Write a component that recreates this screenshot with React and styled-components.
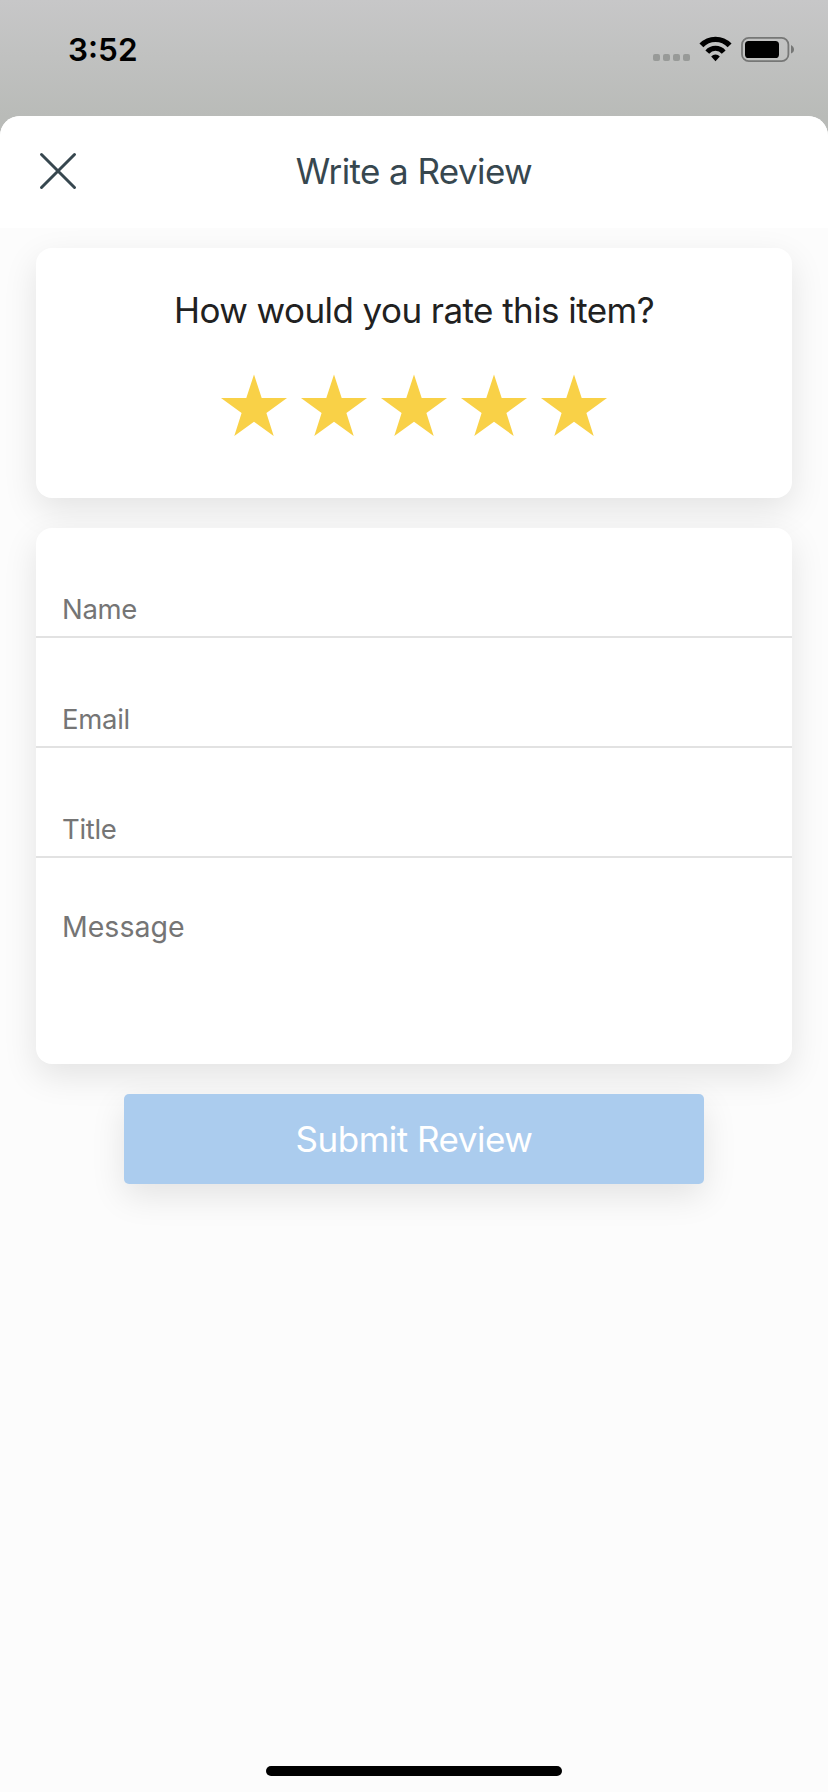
import React, { useState } from 'react';
import styled, { createGlobalStyle, css } from 'styled-components';

const GlobalStyle = createGlobalStyle`
    * {
        box-sizing: border-box;
    }
    body {
        margin: 0;
        font-family: Inter, "Liberation Sans", sans-serif;
        -webkit-font-smoothing: antialiased;
    }
`;

const Screen = styled.div`
    width: 828px;
    height: 1792px;
    display: flex;
    flex-direction: column;
    overflow: hidden;
    background: linear-gradient(#c7c7c8 0, #b9bbb8 116px, #b9bbb8 100%);
`;

const StatusBar = styled.div`
    height: 116px;
    flex: none;
    display: flex;
    justify-content: space-between;
    padding: 30px 34px 0 68px;
`;

const Clock = styled.div`
    font-size: 31.5px;
    line-height: 40px;
    font-weight: 600;
    letter-spacing: 0;
    color: #000;
`;

const StatusIcons = styled.svg`
    width: 144px;
    height: 30px;
    margin-top: 5px;
`;

const Sheet = styled.div`
    flex: 1;
    display: flex;
    flex-direction: column;
    background: #fcfcfc;
    border-radius: 20px 20px 0 0;
    overflow: hidden;
`;

const Header = styled.div`
    height: 112px;
    flex: none;
    display: grid;
    grid-template-columns: 116px 1fr 116px;
    align-items: center;
    padding-bottom: 2px;
    background: #fff;
`;

const CloseButton = styled.button`
    width: 40px;
    height: 40px;
    margin-left: 38px;
    padding: 0;
    border: 0;
    background: none;
    svg {
        display: block;
    }
`;

const HeaderTitle = styled.div`
    text-align: center;
    font-size: 35px;
    line-height: 44px;
    letter-spacing: -0.6px;
    color: #37474f;
`;

const Content = styled.div`
    flex: 1;
    display: flex;
    flex-direction: column;
    gap: 30px;
    padding: 20px 36px 0;
`;

const Card = styled.div`
    height: ${props => props.$height}px;
    background: #fff;
    border-radius: 16px;
    box-shadow: 0 12px 34px rgba(0, 0, 0, 0.1);
`;

const Question = styled.div`
    padding-top: 40px;
    text-align: center;
    font-size: 35px;
    line-height: 44px;
    letter-spacing: -0.57px;
    color: #212121;
`;

const Stars = styled.div`
    display: flex;
    justify-content: center;
    margin-top: 35px;
`;

const StarButton = styled.button`
    width: 80px;
    height: 80px;
    padding: 0;
    border: 0;
    background: none;
    svg {
        display: block;
        fill: ${props => (props.$active ? '#f9d147' : '#e0e0e0')};
    }
`;

const field = css`
    display: block;
    width: 100%;
    border: 0;
    outline: 0;
    background: transparent;
    font-family: inherit;
    color: #212121;
    &::placeholder {
        color: #757575;
        opacity: 1;
    }
`;

const Input = styled.input`
    ${field}
    height: 110px;
    padding: 54px 26px 0;
    border-bottom: 2px solid #e2e2e2;
    font-size: 27.5px;
    letter-spacing: -0.3px;
`;

const TextArea = styled.textarea`
    ${field}
    height: 200px;
    padding: 50px 26px 0;
    resize: none;
    font-size: 28.5px;
    line-height: 38px;
    letter-spacing: 0;
`;

const SubmitButton = styled.button`
    align-self: center;
    width: 580px;
    height: 90px;
    padding: 0;
    border: 0;
    border-radius: 5px;
    background: #abccee;
    box-shadow: 0 12px 34px rgba(0, 0, 0, 0.1);
    font-family: inherit;
    font-size: 35px;
    letter-spacing: -0.5px;
    color: #fff;
`;

const HomeIndicator = styled.div`
    flex: none;
    align-self: center;
    width: 296px;
    height: 10px;
    margin-bottom: 16px;
    border-radius: 5px;
    background: #000;
`;

const fields = ['Name', 'Email', 'Title'];

function Star({ active, onClick }) {
    return (
        <StarButton $active={active} onClick={onClick}>
            <svg width="80" height="80" viewBox="0 0 80 80">
                <path d="M40 7.5 L47.7 31 H73 L52.4 46 L59.7 69 L40 54.8 L20.3 69 L27.6 46 L7 31 H32.3 Z" />
            </svg>
        </StarButton>
    )
}

function App() {
    const [rating, setRating] = useState(5)

    return (
        <Screen>
            <GlobalStyle />
            <StatusBar>
                <Clock>3:52</Clock>
                <StatusIcons viewBox="650 35 144 30">
                    <g fill="#989a98">
                        <rect x="653" y="54" width="7" height="7" rx="2" />
                        <rect x="663" y="54" width="7" height="7" rx="2" />
                        <rect x="673" y="54" width="7" height="7" rx="2" />
                        <rect x="683" y="54" width="7" height="7" rx="2" />
                    </g>
                    <g fill="none" stroke="#000">
                        <path d="M701.4 45.4 A19.5 19.5 0 0 1 729.6 45.4" strokeWidth="5.4" />
                        <path d="M707.3 52.1 A10.8 10.8 0 0 1 723.7 52.1" strokeWidth="5" />
                    </g>
                    <path d="M715.5 61.2 L711.2 56.6 A5.6 5.6 0 0 1 719.8 56.6 Z" />
                    <rect x="742" y="37.8" width="46.4" height="23.4" rx="6.8" fill="none" stroke="#767776" strokeWidth="1.8" />
                    <rect x="745" y="41" width="34" height="17" rx="3.6" />
                    <path d="M791 45 C795 47 795 52 791 53.5 Z" fill="#767776" />
                </StatusIcons>
            </StatusBar>
            <Sheet>
                <Header>
                    <CloseButton aria-label="Close">
                        <svg width="40" height="40" viewBox="0 0 40 40">
                            <path d="M3.5 3.5 L36.5 36.5 M36.5 3.5 L3.5 36.5" stroke="#37474f" strokeWidth="3" strokeLinecap="round" />
                        </svg>
                    </CloseButton>
                    <HeaderTitle>Write a Review</HeaderTitle>
                </Header>
                <Content>
                    <Card $height={250}>
                        <Question>How would you rate this item?</Question>
                        <Stars>
                            {[1, 2, 3, 4, 5].map(value => (
                                <Star key={value} active={value <= rating} onClick={() => setRating(value)} />
                            ))}
                        </Stars>
                    </Card>
                    <Card $height={536}>
                        {fields.map(name => (
                            <Input key={name} placeholder={name} />
                        ))}
                        <TextArea placeholder="Message" />
                    </Card>
                    <SubmitButton>Submit Review</SubmitButton>
                </Content>
                <HomeIndicator />
            </Sheet>
        </Screen>
    )
}

export default App;
